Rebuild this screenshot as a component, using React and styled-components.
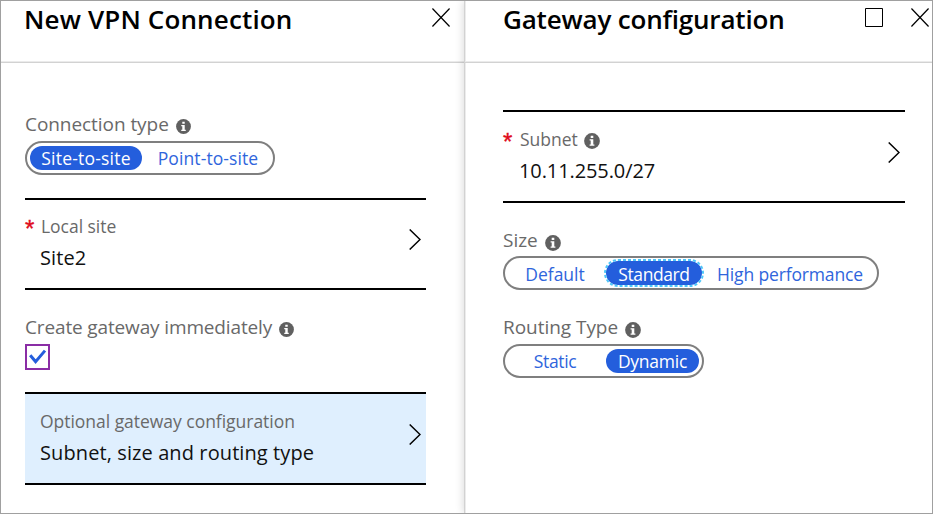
import React from 'react';
import styled, { createGlobalStyle, css } from 'styled-components';

const GlobalStyle = createGlobalStyle`
  *, *::before, *::after { box-sizing: border-box; }
  body { margin: 0; background: #fff; }
  button { appearance: none; background: none; border: 0; padding: 0; margin: 0; font: inherit; color: inherit; text-align: left; }
  svg { display: block; flex: none; }
`;

const Frame = styled.div`
  display: grid;
  grid-template-columns: 463px 1fr;
  width: 933px;
  height: 514px;
  border: 1px solid #a0a0a0;
  background: #fff;
  font-family: "Open Sans", "Noto Sans", sans-serif;
  overflow: hidden;
`;

const Blade = styled.section`
  min-width: 0;
  display: flex;
  flex-direction: column;
  background: #fff;
  ${(p) =>
    p.$raised &&
    css`
      border-left: 1px solid #d2d2d2;
      box-shadow: inset 1px 0 0 #ececec, -1px 0 8px rgba(0, 0, 0, 0.14);
    `}
`;

const Header = styled.header`
  display: flex;
  align-items: flex-start;
  height: 62px;
  flex: none;
  padding: 0 ${(p) => p.$right}px 0 ${(p) => p.$left}px;
  border-bottom: 1px solid #d2d2d2;
  box-shadow: inset 0 -1px 0 #ebebeb;
`;

const Title = styled.h1`
  margin: 0;
  padding-top: 1px;
  flex: 1;
  font-size: 26px;
  line-height: 34px;
  font-weight: 600;
  letter-spacing: ${(p) => p.$track || 0}px;
  color: #000;
  white-space: nowrap;
`;

const Controls = styled.div`
  display: flex;
  gap: 28px;
  padding-top: 7px;
`;

const Body = styled.div`
  display: flex;
  flex-direction: column;
  width: ${(p) => p.$width}px;
  margin-left: ${(p) => p.$left}px;
  padding-top: ${(p) => p.$top}px;
`;

const Field = styled.div`
  display: flex;
  flex-direction: column;
  align-items: flex-start;
  gap: ${(p) => p.$gap || 6}px;
  margin-bottom: ${(p) => p.$after || 0}px;
`;

const LabelRow = styled.div`
  display: flex;
  align-items: flex-start;
  gap: 7px;
  height: 22px;
  font-size: 19px;
  line-height: 22px;
  letter-spacing: ${(p) => p.$track || 0}px;
  color: #696969;
  white-space: nowrap;
  svg { margin-top: 6px; }
`;

const Pill = styled.div`
  display: flex;
  gap: 4px;
  height: 34px;
  padding: 3px;
  border: 2px solid #7f7f7f;
  border-radius: 17px;
`;

const Option = styled.button`
  && {
    position: relative;
    width: ${(p) => p.$width}px;
    height: 24px;
    padding-top: ${(p) => p.$drop || 0}px;
    border-radius: 12px;
    font-size: 17.5px;
    line-height: 24px;
    letter-spacing: ${(p) => p.$track || 0}px;
    text-align: center;
    white-space: nowrap;
    color: ${(p) => (p.$selected ? '#fff' : '#2f65dc')};
    background: ${(p) => (p.$selected ? '#245edc' : 'transparent')};
  }
`;

const RingSvg = styled.svg`
  position: absolute;
  top: -2px;
  left: -2px;
`;

const FocusRing = ({ width }) => (
  <RingSvg width={width + 4} height="28" fill="none">
    <rect x="1" y="1" width={width + 2} height="26" rx="13" stroke="#4fc6f8" strokeWidth="2" strokeDasharray="3 2" />
  </RingSvg>
);

const PickerButton = styled.button`
  && {
    display: flex;
    align-items: flex-start;
    width: 100%;
    height: ${(p) => p.$height || 93}px;
    padding: ${(p) => p.$top || 17}px 5px 0 0;
    margin-bottom: ${(p) => p.$after || 0}px;
    border-top: 2px solid #000;
    border-bottom: 2px solid #000;
    background: ${(p) => (p.$active ? '#dfeffe' : 'transparent')};
  }
  > svg { margin-top: 13px; }
`;

const Marker = styled.span`
  width: ${(p) => p.$width}px;
  height: 20px;
  flex: none;
  font-family: "Liberation Sans", sans-serif;
  font-size: 24px;
  line-height: 26px;
  color: #e00b1c;
  -webkit-text-stroke: 0.4px #e00b1c;
`;

const PickerText = styled.span`
  flex: 1;
  display: flex;
  flex-direction: column;
  gap: 10px;
  white-space: nowrap;
`;

const PickerLabel = styled.span`
  display: flex;
  gap: 6px;
  height: 20px;
  padding-left: ${(p) => p.$indent || 0}px;
  font-size: 17.5px;
  line-height: 20px;
  color: #696969;
  letter-spacing: -0.03px;
  svg { margin-top: 4px; }
`;

const PickerValue = styled.span`
  font-size: 20px;
  line-height: 24px;
  letter-spacing: ${(p) => p.$track || 0}px;
  color: #111;
`;

const Checkbox = styled.button`
  && {
    width: 25px;
    height: 26px;
    border: 2px solid #8a2da5;
    background: #fff;
  }
`;

const InfoIcon = ({ size = 16 }) => (
  <svg width={size} height={size} viewBox="0 0 16 16">
    <circle cx="8" cy="8" r="7.9" fill="#606060" />
    <path d="M6.7 2.8h2.6v2.3H6.7zM5.6 6.3h3.7v5.2h1.1v1.3H5.6v-1.3h1.1V7.6H5.6z" fill="#fff" />
  </svg>
);

const CloseIcon = () => (
  <svg width="18" height="19" viewBox="0 0 18 19" fill="none" stroke="#000" strokeWidth="1.35">
    <path d="M.4.5 17.6 18.5M17.6.5.4 18.5" />
  </svg>
);

const MaximizeIcon = () => (
  <svg width="18" height="19" viewBox="0 0 18 19" fill="none" stroke="#000">
    <path d="M.5.5h17v18H.5z" />
  </svg>
);

const ChevronIcon = () => (
  <svg width="12" height="21" viewBox="0 0 12 21" fill="none" stroke="#000" strokeWidth="1.5">
    <path d="M.7.5 11 10.5.7 20.5" />
  </svg>
);

const CheckIcon = () => (
  <svg width="21" height="22" viewBox="0 0 21 22" fill="none" stroke="#245edc" strokeWidth="3">
    <path d="M3.2 9.3 8.6 15.6 18 4.6" />
  </svg>
);

const Picker = ({ label, value, required, info, markerWidth = 15, indent, track, ...rest }) => (
  <PickerButton {...rest}>
    <Marker $width={markerWidth}>{required ? '*' : ''}</Marker>
    <PickerText>
      <PickerLabel $indent={indent}>
        {label}
        {info && <InfoIcon />}
      </PickerLabel>
      <PickerValue $track={track}>{value}</PickerValue>
    </PickerText>
    <ChevronIcon />
  </PickerButton>
);

export default function App() {
  return (
    <>
      <GlobalStyle />
      <Frame>
        <Blade>
          <Header $left={23} $right={14}>
            <Title $track={0.15}>New VPN Connection</Title>
            <Controls><CloseIcon /></Controls>
          </Header>
          <Body $left={24} $width={401} $top={50}>
            <Field $after={23}>
              <LabelRow $track={-0.06}>Connection type<InfoIcon size={15} /></LabelRow>
              <Pill>
                <Option $width={112} $track={0.2} $selected>Site-to-site</Option>
                <Option $width={124} $track={0.1}>Point-to-site</Option>
              </Pill>
            </Field>
            <Picker label="Local site" value="Site2" required $height={92} $top={16} $after={26} indent={1} track={0.1} />
            <Field $after={22}>
              <LabelRow $track={-0.14}>Create gateway immediately<InfoIcon size={15} /></LabelRow>
              <Checkbox><CheckIcon /></Checkbox>
            </Field>
            <Picker label="Optional gateway configuration" value="Subnet, size and routing type" $active track={0.1} />
          </Body>
        </Blade>
        <Blade $raised>
          <Header $left={38} $right={3}>
            <Title $track={-0.18}>Gateway configuration</Title>
            <Controls><MaximizeIcon /><CloseIcon /></Controls>
          </Header>
          <Body $left={38} $width={402} $top={47}>
            <Picker label="Subnet" value="10.11.255.0/27" required info markerWidth={16} $after={26} indent={1} track={-0.1} />
            <Field $gap={5} $after={26}>
              <LabelRow>Size<InfoIcon /></LabelRow>
              <Pill>
                <Option $width={94} $drop={1}>Default</Option>
                <Option $width={96} $drop={1} $track={-0.4} $selected>
                  Standard
                  <FocusRing width={96} />
                </Option>
                <Option $width={168} $drop={1} $track={-0.14}>High performance</Option>
              </Pill>
            </Field>
            <Field>
              <LabelRow $track={-0.04}>Routing Type<InfoIcon /></LabelRow>
              <Pill>
                <Option $width={94} $track={-0.35}>Static</Option>
                <Option $width={93} $track={-0.25} $selected>Dynamic</Option>
              </Pill>
            </Field>
          </Body>
        </Blade>
      </Frame>
    </>
  );
}
